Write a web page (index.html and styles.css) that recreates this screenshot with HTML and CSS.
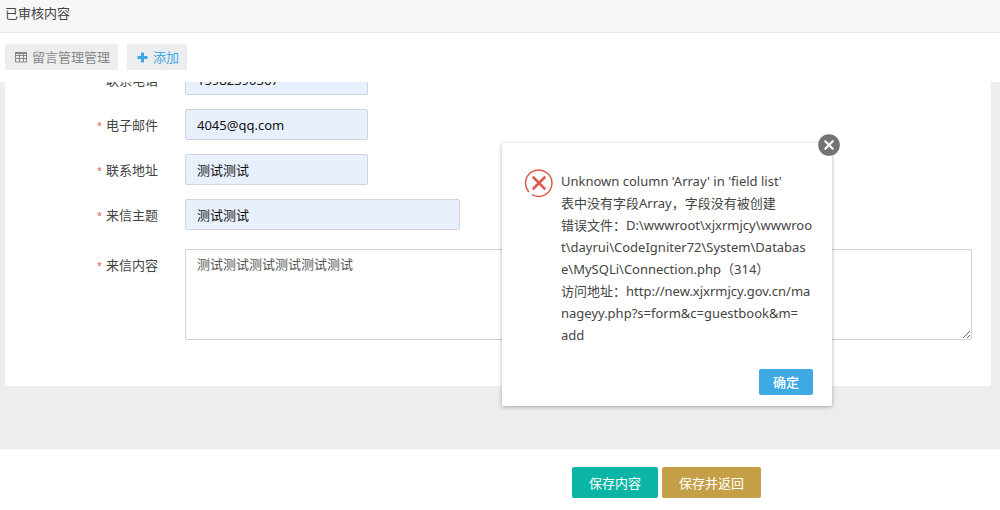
FILE: index.html
```html
<!DOCTYPE html>
<html lang="zh-CN">
<head>
<meta charset="utf-8">
<title>已审核内容</title>
<link rel="stylesheet" href="styles.css">
</head>
<body>
<header class="page-title">已审核内容</header>
<nav class="toolbar">
  <a class="tool tool-muted" href="#">
    <svg width="12" height="12" viewBox="0 0 12 12" fill="none" stroke="currentColor"><path d="M.5 1.5h11v9.500h-11zM.5 4.500h11M.5 7.500h11M4.500 2v9M8.500 2v9"/><path d="M0 2h12" stroke-width="2"/></svg>
    留言管理管理
  </a>
  <a class="tool tool-add" href="#">
    <svg width="11" height="11" viewBox="0 0 11 11" fill="currentColor"><path d="M4 .5h3V4h3.500v3H7v3.500H4V7H.5V4H4z"/></svg>
    添加
  </a>
</nav>
<main class="content">
  <form class="panel" id="guestbook">
    <div class="row">
      <label for="phone"><span class="req">*</span>联系电话</label>
      <input class="field" id="phone" type="text" value="15982390367">
    </div>
    <div class="row">
      <label for="email"><span class="req">*</span>电子邮件</label>
      <input class="field" id="email" type="text" value="4045@qq.com">
    </div>
    <div class="row">
      <label for="address"><span class="req">*</span>联系地址</label>
      <input class="field" id="address" type="text" value="测试测试">
    </div>
    <div class="row">
      <label for="subject"><span class="req">*</span>来信主题</label>
      <input class="field field-wide" id="subject" type="text" value="测试测试">
    </div>
    <div class="row row-area">
      <label for="body"><span class="req">*</span>来信内容</label>
      <textarea class="area" id="body">测试测试测试测试测试测试</textarea>
    </div>
  </form>
  <div class="spacer"></div>
</main>
<footer class="actions">
  <button class="btn btn-save" type="submit" form="guestbook">保存内容</button>
  <button class="btn btn-back" type="submit" form="guestbook">保存并返回</button>
</footer>
<section class="dialog" role="alertdialog" aria-describedby="message">
  <button class="close" type="button" aria-label="关闭">
    <svg width="22" height="22" viewBox="0 0 22 22"><circle cx="11" cy="11" r="10.800" fill="#737373"/><path d="M7.300 7.300l7.400 7.400M14.700 7.300l-7.400 7.400" stroke="#fff" stroke-width="2.200" stroke-linecap="round"/></svg>
  </button>
  <div class="dialog-main">
    <svg class="error-icon" width="30" height="30" viewBox="0 0 30 30" fill="none" stroke="#dc5a4b" stroke-linecap="round"><path d="M4.500 23.500A13.200 13.200 0 1 1 8.500 26.800" stroke-width="1.500"/><path d="M9.500 9.500l11 11M20.500 9.500l-11 11" stroke-width="2.600"/></svg>
    <p class="message" id="message">Unknown column 'Array' in 'field list'<br>表中没有字段Array，字段没有被创建<br>错误文件：D:\wwwroot\xjxrmjcy\wwwroo<br>t\dayrui\CodeIgniter72\System\Databas<br>e\MySQLi\Connection.php（314）<br>访问地址：http://new.xjxrmjcy.gov.cn/ma<br>nageyy.php?s=form&amp;c=guestbook&amp;m=<br>add</p>
  </div>
  <div class="dialog-foot"><button class="ok" type="button">确定</button></div>
</section>
</body>
</html>
```
FILE: styles.css
```css
* { box-sizing: border-box; }

body {
  margin: 0;
  height: 100vh;
  display: flex;
  flex-direction: column;
  background: #fff;
  color: #444;
  font: 13px/20px "Noto Sans", "Noto Sans CJK SC", sans-serif;
}

button, input, textarea { font: inherit; }

.page-title {
  padding: 3px 5px 9px;
  background: #f7f7f7;
  border-bottom: 1px solid #ebebeb;
}

.toolbar {
  display: flex;
  gap: 9px;
  padding: 11px 5px 12px;
}

.tool {
  display: flex;
  align-items: center;
  gap: 5px;
  padding: 3px 8px 3px 10px;
  background: #ecedef;
  text-decoration: none;
}

.tool-muted { color: #888; }
.tool-add { color: #3fa9e4; }

.content {
  flex: 1;
  min-height: 0;
  display: flex;
  flex-direction: column;
  justify-content: flex-end;
  overflow: hidden;
  padding: 0 9px 0 5px;
  background: #ecedef;
}

.panel {
  display: flex;
  flex-direction: column;
  gap: 14px;
  padding: 20px 19px 46px 0;
  background: #fff;
  border-radius: 2px;
}

.spacer { flex: none; height: 63px; }

.row { display: flex; gap: 27px; }
.row-area { padding-top: 5px; }

.row label {
  flex: none;
  width: 153px;
  padding-top: 6px;
  text-align: right;
}

.req {
  margin-right: 4px;
  color: #e05555;
  font-size: 9px;
  line-height: 1;
  vertical-align: 1px;
}

.field {
  width: 183px;
  height: 31px;
  padding: 0 11px;
  border: 1px solid #d0d3da;
  border-radius: 2px;
  background: #e8f0fe;
  color: #111;
}

.field-wide { width: 275px; }

.area {
  flex: 1;
  height: 91px;
  padding: 4px 11px;
  border: 1px solid #d0d0d0;
  border-radius: 2px;
  background: #fff;
  color: #555;
}

.actions {
  display: flex;
  gap: 4px;
  padding: 18px 0 12px 572px;
}

.btn {
  height: 31px;
  padding: 0 17px;
  border: 0;
  border-radius: 2px;
  color: #fff;
}

.btn-save { background: #0bb5a6; }
.btn-back { background: #c49f47; }

.dialog {
  position: absolute;
  top: 143px;
  left: 502px;
  width: 330px;
  padding: 27px 19px 11px 22px;
  background: #fff;
  border-radius: 2px;
  box-shadow: 0 1px 4px rgba(0, 0, 0, .3);
}

.close {
  position: absolute;
  top: -9px;
  right: -8px;
  padding: 0;
  border: 0;
  border-radius: 50%;
  background: none;
  display: flex;
}

.dialog-main { display: flex; gap: 7px; }
.error-icon { flex: none; margin-top: -2px; }

.message {
  margin: 0;
  line-height: 22px;
  white-space: nowrap;
}

.dialog-foot {
  display: flex;
  justify-content: flex-end;
  padding-top: 23px;
}

.ok {
  height: 26px;
  padding: 0 14px;
  border: 0;
  border-radius: 2px;
  background: #3fa9e4;
  color: #fff;
  font-weight: 500;
}
```
